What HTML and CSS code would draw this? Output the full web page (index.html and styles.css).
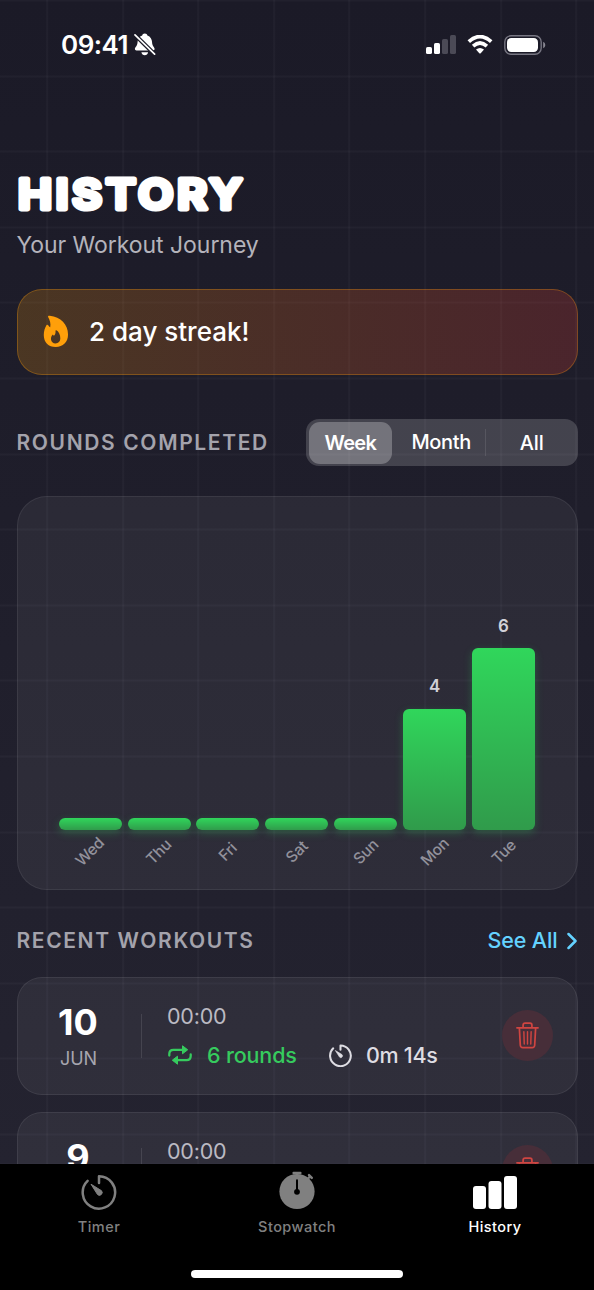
FILE: index.html
```html
<!DOCTYPE html>
<html lang="en">
<head>
<meta charset="utf-8">
<title>History</title>
<link rel="stylesheet" href="styles.css">
</head>
<body>
<svg class="defs" width="0" height="0" aria-hidden="true">
  <symbol id="timer" viewBox="0 0 36 36">
    <path class="dial" d="M18 9V2.2A16.2 16.2 0 1 1 6.6 6.8" fill="none" stroke="currentColor" stroke-linecap="round" stroke-linejoin="round"/>
    <path d="M10 10.2 20.3 16.6A2.7 2.7 0 1 1 16.5 20.5Z" fill="currentColor" stroke="currentColor" stroke-width="1" stroke-linejoin="round"/>
  </symbol>
  <symbol id="trash" viewBox="0 0 24 28">
    <g fill="none" stroke="currentColor" stroke-width="1.8" stroke-linecap="round" stroke-linejoin="round">
      <path d="M1 6H23M7.4 6V3.2Q7.4 1.2 9.4 1.2H14.6Q16.6 1.2 16.6 3.2V6M3.5 6 4.5 24.2Q4.7 26.6 7 26.6H17Q19.3 26.6 19.5 24.2L20.5 6"/>
      <path d="M8.2 10 8.6 22.8M12 10V22.8M15.8 10 15.4 22.8" stroke-width="1.5"/>
    </g>
  </symbol>
</svg>
<div class="screen">
  <main class="content">
    <header class="status">
      <span class="time">09:41</span>
      <svg class="bell" viewBox="0 0 22 23">
        <path d="M10.8.5C12.3.5 13.2 1.4 13.4 2.5 16.5 3.6 18 6.4 18.1 9.6 18.2 13.4 20.6 14.2 20.6 16.1 20.6 17 20 17.5 19 17.5H2.5C1.5 17.5.9 17 .9 16.1.9 14.2 3.3 13.4 3.5 9.6 3.6 6.4 5.1 3.6 8.2 2.5 8.4 1.4 9.3.5 10.8.5ZM7.4 19.2H14.1C13.8 21.1 12.5 22.2 10.8 22.2S7.7 21.1 7.4 19.2Z" fill="#fff"/>
        <path d="M.8 1.7 20.8 21.4" stroke="#1c1b28" stroke-width="4.2"/>
        <path d="M1 1.9 20.6 21.2" stroke="#fff" stroke-width="1.7" stroke-linecap="round"/>
      </svg>
      <svg class="signal" viewBox="0 0 30 19">
        <rect x="0" y="12" width="6" height="7" rx="1.6" fill="#fff"/>
        <rect x="8" y="8" width="6" height="11" rx="1.6" fill="#fff"/>
        <rect x="16" y="4" width="6" height="15" rx="1.6" fill="#4b4a56"/>
        <rect x="24" y="0" width="6" height="19" rx="1.6" fill="#4b4a56"/>
      </svg>
      <svg class="wifi" viewBox="0 0 26 19">
        <path d="M1.8 6.7Q13-3.5 24.2 6.7M6.1 11.1Q13 5 19.9 11.1" fill="none" stroke="#fff" stroke-width="3.7"/>
        <path d="M9 14.6Q13 11.4 17 14.6L13.7 18.2Q13 18.9 12.3 18.2Z" fill="#fff"/>
      </svg>
      <svg class="battery" viewBox="0 0 42 20">
        <rect x=".8" y=".8" width="36.4" height="18.4" rx="6.2" fill="none" stroke="#777682" stroke-width="1.4"/>
        <rect x="3" y="3" width="31" height="14" rx="4.2" fill="#fff"/>
        <path d="M39.2 6.8Q41.3 7.8 41.3 10T39.2 13.2Z" fill="#8a8993"/>
      </svg>
    </header>

    <svg class="title" viewBox="0 0 240 50" role="heading" aria-level="1"><text x="1" y="38" textLength="228" lengthAdjust="spacingAndGlyphs">HISTORY</text></svg>
    <p class="subtitle">Your Workout Journey</p>

    <section class="streak">
      <svg class="flame" viewBox="0 0 27 34">
        <path fill="#ff9f0a" fill-rule="evenodd" d="M5.3 1.9C5 .8 5.8.5 7 .7 18.4 1.8 26 9.7 26 20.2 26 28 20.8 33.2 13.2 33.2S.8 28.2.8 20.7C.8 16.8 2 13 3.7 10.3 4.2 9.6 5 9.8 5.4 10.5 6 11.5 6.6 12.2 7.5 12.6 8.3 8.2 7.2 5.6 5.3 1.9ZM13.9 15.8C13.2 15.4 12.9 15.8 13 16.5 13.3 18.9 12.4 20.4 11.4 21.5 10.8 21.1 10.5 20.6 10.3 20 8.7 21.5 8.2 23.2 8.3 25 8.5 27.7 10.4 29.4 13 29.4 16 29.4 18 27.4 18 24.3 18 20.4 16.4 17.3 13.9 15.8Z"/>
      </svg>
      <span>2 day streak!</span>
    </section>

    <section class="rounds-head">
      <h2 class="heading">ROUNDS COMPLETED</h2>
      <div class="segments">
        <span class="segment selected">Week</span>
        <span class="segment month">Month</span>
        <span class="segment all">All</span>
      </div>
    </section>

    <section class="chart">
      <div class="day"><i class="bar"></i><b>Wed</b></div>
      <div class="day"><i class="bar"></i><b>Thu</b></div>
      <div class="day"><i class="bar"></i><b>Fri</b></div>
      <div class="day"><i class="bar"></i><b>Sat</b></div>
      <div class="day"><i class="bar"></i><b>Sun</b></div>
      <div class="day"><em>4</em><i class="bar" style="height:121px"></i><b>Mon</b></div>
      <div class="day"><em>6</em><i class="bar" style="height:181.5px"></i><b>Tue</b></div>
    </section>

    <section class="recent-head">
      <h2 class="heading">RECENT WORKOUTS</h2>
      <a class="see-all">See All<svg viewBox="0 0 10 18"><path d="M1.5 2 8.5 9 1.5 16" fill="none" stroke="currentColor" stroke-width="2.5" stroke-linecap="round" stroke-linejoin="round"/></svg></a>
    </section>

    <article class="workout">
      <div class="date"><strong>10</strong><span>JUN</span></div>
      <div class="rule"></div>
      <div class="details">
        <div class="clock">00:00</div>
        <div class="stats">
          <svg class="repeat" viewBox="0 0 24 20">
            <path d="M1.3 10.5V9Q1.3 4.8 5.5 4.8H15M22.7 9.5V11Q22.7 15.2 18.5 15.2H9" fill="none" stroke="currentColor" stroke-width="2.3" stroke-linecap="round"/>
            <path d="M14.5.8V8.8L19.7 4.8ZM9.5 11.2V19.2L4.3 15.2Z" fill="currentColor" stroke="currentColor" stroke-linejoin="round"/>
          </svg>
          <span class="count">6 rounds</span>
          <svg class="small-timer"><use href="#timer"/></svg>
          <span class="length">0m 14s</span>
        </div>
      </div>
      <div class="delete"><svg><use href="#trash"/></svg></div>
    </article>

    <article class="workout">
      <div class="date"><strong>9</strong></div>
      <div class="rule"></div>
      <div class="details"><div class="clock">00:00</div></div>
      <div class="delete"><svg><use href="#trash"/></svg></div>
    </article>
  </main>

  <nav class="tabs">
    <div class="tab"><svg viewBox="0 0 36 36"><use href="#timer"/></svg><span>Timer</span></div>
    <div class="tab stopwatch">
      <svg viewBox="0 0 36 40">
        <path d="M14.6 3H21.4M18 3V6M28.5 9 31.2 6.4M30 5.1 32.8 7.9" stroke="currentColor" stroke-width="2.4" stroke-linecap="round"/>
        <circle cx="18" cy="21.5" r="17.6" fill="currentColor"/>
        <path d="M18 10.2V20" stroke="#000" stroke-width="2" stroke-linecap="round"/>
        <circle cx="18" cy="21.8" r="2.9"/>
      </svg>
      <span>Stopwatch</span>
    </div>
    <div class="tab active">
      <svg class="bars" viewBox="0 0 44 33"><g fill="currentColor"><rect y="10" width="13" height="23" rx="3"/><rect x="15.5" y="5" width="13" height="28" rx="3"/><rect x="31" width="13" height="33" rx="3"/></g></svg>
      <span>History</span>
    </div>
    <div class="home"></div>
  </nav>
</div>
</body>
</html>
```
FILE: styles.css
```css
* { box-sizing: border-box; }
body { margin: 0; background: #000; font-family: Inter, "Liberation Sans", sans-serif; color: #fff; }
.defs { position: absolute; }
.screen { width: 594px; height: 1290px; display: flex; flex-direction: column; overflow: hidden; }
.content {
  height: 1164px; flex: none; overflow: hidden; padding: 0 16.5px;
  display: flex; flex-direction: column;
  background:
    repeating-linear-gradient(90deg, rgba(255,255,255,.027) 0 2px, transparent 2px 75.6px) 46.2px 0 / 605px 100%,
    repeating-linear-gradient(180deg, rgba(255,255,255,.027) 0 2px, transparent 2px 75.6px) 0 -.5px,
    linear-gradient(180deg, #1b1a27, #242330);
}
.content > * { flex: none; }

.status { height: 171px; padding: 35px 0 0 44.5px; display: flex; align-items: flex-start; }
.time { width: 73px; font-size: 26px; font-weight: 600; line-height: 19px; letter-spacing: -.5px; white-space: nowrap; }
.bell { width: 22px; height: 23px; margin-top: -2px; }
.signal { width: 30px; height: 19px; margin-left: 270px; }
.wifi { width: 26px; height: 19px; margin-left: 10.5px; }
.battery { width: 42px; height: 20px; margin-left: 11px; margin-top: -.5px; }

.title { width: 240px; height: 50px; overflow: visible; }
.title text { font-size: 41px; font-weight: 600; letter-spacing: 3.5px; fill: #fff; stroke: #fff; stroke-width: 5.2px; stroke-linejoin: round; }
.subtitle { margin: 10px 0 0; font-size: 23px; line-height: 28px; letter-spacing: -.05px; color: #b4b3bb; }

.streak {
  height: 86px; margin-top: 29.5px; padding-left: 25px; border: 1.5px solid rgba(255,159,10,.3); border-radius: 25px;
  display: flex; align-items: center; font-size: 26px; font-weight: 550; letter-spacing: 0;
  background: linear-gradient(90deg, rgba(255,159,10,.2), rgba(255,69,58,.2)) border-box;
}
.flame { width: 26px; height: 33px; margin-right: 20.5px; }

.rounds-head { height: 47px; margin-top: 44.5px; display: flex; justify-content: space-between; align-items: center; }
.heading { margin: 0; font-size: 21px; font-weight: 600; line-height: 26px; letter-spacing: 1.63px; color: #a4a3ac; white-space: nowrap; }
.segments { width: 271.5px; height: 47px; padding: 2.5px; border-radius: 13px; background: rgba(255,255,255,.17); display: flex; align-items: center; font-size: 20px; line-height: 43px; text-align: center; letter-spacing: -.1px; }
.segment { font-weight: 450; }
.selected { width: 84px; border-radius: 11px; background: rgba(255,255,255,.26); font-weight: 600; letter-spacing: -.7px; line-height: 43px; height: 42px; }
.month { width: 93.5px; padding-left: 5px; letter-spacing: -.3px; }
.all { width: 90px; height: 27px; line-height: 28px; padding-left: 2px; border-left: 1.5px solid rgba(255,255,255,.1); }

.chart { height: 394px; margin-top: 30px; padding: 0 40.7px 59.5px 41.2px; border: 1.5px solid rgba(255,255,255,.07); border-radius: 30px; background: rgba(255,255,255,.055); display: flex; gap: 5.9px; align-items: flex-end; }
.day { width: 63px; display: flex; flex-direction: column; align-items: center; position: relative; }
.day em { font: 600 17px/20px Inter, sans-serif; color: #d2d1d7; margin-bottom: 12.5px; }
.bar { width: 63px; height: 12px; border-radius: 6px; background: linear-gradient(#30d65b, #309b4b); box-shadow: 0 3px 8px rgba(48,209,88,.28); }
.day b { position: absolute; top: 100%; left: 50%; font-size: 15.5px; font-weight: 500; line-height: 20px; letter-spacing: -.3px; color: #92919b; transform: translate(-50%, 12px) rotate(-45deg); }

.recent-head { height: 28px; margin-top: 36.5px; display: flex; justify-content: space-between; align-items: center; }
.see-all { display: flex; align-items: center; gap: 9px; padding: 0 1px 1px 0; color: #64d2ff; font-size: 21.5px; font-weight: 550; letter-spacing: -.15px; }
.see-all svg { width: 10px; height: 18px; margin-top: 1px; }

.workout { height: 117.5px; margin-top: 22.5px; border: 1.5px solid rgba(255,255,255,.08); border-radius: 25px; background: rgba(255,255,255,.055); display: flex; align-items: center; }
.workout + .workout { margin-top: 17px; }
.date { width: 121px; height: 67px; display: flex; flex-direction: column; align-items: center; }
.date strong { font-size: 36px; font-weight: 700; line-height: 41px; letter-spacing: .2px; }
.date span { font-size: 18px; line-height: 22px; margin-top: 4.5px; padding-left: 1px; color: #a7a6af; }
.rule { width: 1.5px; height: 44px; margin-left: 2px; background: rgba(255,255,255,.11); }
.details { height: 117px; width: 334px; margin-left: 25px; padding-top: 25px; }
.clock { font-size: 21.5px; line-height: 28px; letter-spacing: -.2px; color: #bbbac3; }
.stats { height: 28px; margin-top: 11px; display: flex; align-items: center; font-size: 21.5px; font-weight: 500; white-space: nowrap; }
.repeat { width: 24px; height: 20px; margin-left: 1px; color: #36cb5e; }
.count { width: 123px; padding-left: 15px; color: #36cb5e; font-weight: 550; letter-spacing: -.15px; }
.dial { stroke-width: var(--dial-width, 2.5px); }
.small-timer { --dial-width: 3.2px; width: 23px; height: 23px; margin-left: 14px; color: #dedde3; }
.length { padding-left: 14px; color: #dedde3; letter-spacing: -.3px; }
.delete { width: 51px; height: 51px; margin-left: .5px; border-radius: 50%; background: #472e39; display: flex; align-items: center; justify-content: center; color: #cf4541; }
.delete svg { width: 23px; height: 27px; }

.tabs { height: 126px; flex: none; background: #000; display: grid; grid-template-columns: 1fr 1fr 1fr; grid-template-rows: 106px 7px; color: #808080; }
.tab { display: flex; flex-direction: column; align-items: center; padding-top: 10px; font-size: 14.5px; font-weight: 500; letter-spacing: .45px; line-height: 18px; }
.tab svg { width: 36px; height: 36px; }
.tab span { margin-top: 8px; }
.stopwatch svg { height: 40px; margin-top: -4px; }
.active { color: #fff; }
.tab .bars { width: 44px; height: 33px; margin: 2px 0 1px; }
.home { grid-column: 1 / 4; justify-self: center; width: 212px; height: 8px; border-radius: 4px; background: #fff; }
```
